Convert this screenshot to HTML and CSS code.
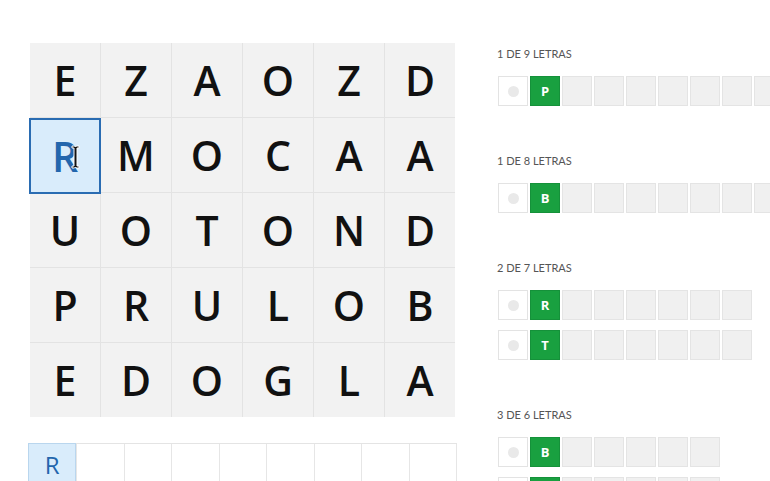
FILE: index.html
```html
<!DOCTYPE html>
<html lang="es">
<head>
<meta charset="utf-8">
<title>Sopa de letras</title>
<link rel="stylesheet" href="styles.css">
</head>
<body>
<div class="app">
  <section class="board">
    <div class="grid">
      <div class="cell">E</div><div class="cell">Z</div><div class="cell">A</div><div class="cell">O</div><div class="cell">Z</div><div class="cell">D</div>
      <div class="cell selected">R<svg class="cursor" width="9" height="24" viewBox="0 0 9 24"><path d="M1 1h2.5l1 1 1-1H8v2H6v18h2v2H5.5l-1-1-1 1H1v-2h2V3H1z" fill="#111" stroke="#fff" stroke-width="1"/></svg></div><div class="cell">M</div><div class="cell">O</div><div class="cell">C</div><div class="cell">A</div><div class="cell">A</div>
      <div class="cell">U</div><div class="cell">O</div><div class="cell">T</div><div class="cell">O</div><div class="cell">N</div><div class="cell">D</div>
      <div class="cell">P</div><div class="cell">R</div><div class="cell">U</div><div class="cell">L</div><div class="cell">O</div><div class="cell">B</div>
      <div class="cell">E</div><div class="cell">D</div><div class="cell">O</div><div class="cell">G</div><div class="cell">L</div><div class="cell">A</div>
    </div>
    <div class="word-input">
      <div class="slot filled">R</div><div class="slot"></div><div class="slot"></div><div class="slot"></div><div class="slot"></div><div class="slot"></div><div class="slot"></div><div class="slot"></div><div class="slot"></div>
    </div>
  </section>
  <aside class="words">
    <div class="group">
      <div class="label">1 DE 9 LETRAS</div>
      <div class="row"><span class="dot-cell"><span class="dot"></span></span><span class="box hint">P</span><span class="box"></span><span class="box"></span><span class="box"></span><span class="box"></span><span class="box"></span><span class="box"></span><span class="box"></span><span class="box"></span></div>
    </div>
    <div class="group">
      <div class="label">1 DE 8 LETRAS</div>
      <div class="row"><span class="dot-cell"><span class="dot"></span></span><span class="box hint">B</span><span class="box"></span><span class="box"></span><span class="box"></span><span class="box"></span><span class="box"></span><span class="box"></span><span class="box"></span></div>
    </div>
    <div class="group">
      <div class="label">2 DE 7 LETRAS</div>
      <div class="row"><span class="dot-cell"><span class="dot"></span></span><span class="box hint">R</span><span class="box"></span><span class="box"></span><span class="box"></span><span class="box"></span><span class="box"></span><span class="box"></span></div>
      <div class="row"><span class="dot-cell"><span class="dot"></span></span><span class="box hint">T</span><span class="box"></span><span class="box"></span><span class="box"></span><span class="box"></span><span class="box"></span><span class="box"></span></div>
    </div>
    <div class="group">
      <div class="label">3 DE 6 LETRAS</div>
      <div class="row"><span class="dot-cell"><span class="dot"></span></span><span class="box hint">B</span><span class="box"></span><span class="box"></span><span class="box"></span><span class="box"></span><span class="box"></span></div>
      <div class="row"><span class="dot-cell"><span class="dot"></span></span><span class="box hint">C</span><span class="box"></span><span class="box"></span><span class="box"></span><span class="box"></span><span class="box"></span></div>
    </div>
  </aside>
</div>
</body>
</html>
```
FILE: styles.css
```css
html, body {
  margin: 0;
  padding: 0;
  background: #ffffff;
  overflow: hidden;
  width: 770px;
  height: 481px;
}
body {
  font-family: "Open Sans", "Noto Sans", sans-serif;
  color: #111;
}
.app {
  display: flex;
  padding: 43px 0 0 30px;
  gap: 41px;
}
.board {
  display: flex;
  flex-direction: column;
  gap: 26px;
  flex: none;
}
.grid {
  display: grid;
  grid-template-columns: repeat(6, 70px);
  grid-template-rows: repeat(5, 74px);
  gap: 1px;
  background: #e3e3e3;
  width: 425px;
}
.cell {
  background: #f2f2f2;
  display: flex;
  align-items: center;
  justify-content: center;
  font-size: 41px;
  font-weight: 600;
  color: #111;
  position: relative;
}
.cell.selected {
  background: #d9ecfb;
  color: #2366ad;
  box-shadow: 0 0 0 1px #2a6cb2, inset 0 0 0 1px #2a6cb2;
  z-index: 1;
  top: 1px;
}
.cursor {
  position: absolute;
  left: 41px;
  top: 26px;
}
.word-input {
  display: flex;
  margin-left: -2px;
  border-top: 1px solid #e4e4e4;
  width: 429px;
}
.slot {
  box-sizing: border-box;
  flex: 1 1 0;
  height: 40px;
  border-left: 1px solid #e6e6e6;
  display: flex;
  justify-content: center;
  padding-top: 9px;
  font-size: 24px;
  font-weight: 500;
  color: #2366ad;
  line-height: 1;
}
.slot:last-child {
  border-right: 1px solid #e6e6e6;
}
.slot.filled {
  background: #d9ecfb;
  border-left-color: #b9d6ee;
  border-right: 1px solid #b9d6ee;
  border-top: 1px solid #b9d6ee;
  margin-top: -1px;
  height: 41px;
}
.words {
  display: flex;
  flex-direction: column;
  gap: 48px;
  padding-top: 4px;
  flex: none;
}
.group {
  display: flex;
  flex-direction: column;
  gap: 10px;
}
.label {
  font-family: "Lato", "Open Sans", sans-serif;
  font-size: 11px;
  line-height: 14px;
  color: #555;
  margin-bottom: 5px;
  margin-left: -1px;
}
.row {
  display: flex;
  gap: 2px;
}
.dot-cell, .box {
  flex: none;
  width: 28px;
  height: 28px;
  border: 1px solid #e3e3e3;
  display: flex;
  align-items: center;
  justify-content: center;
}
.dot-cell {
  background: #fff;
}
.dot {
  width: 11px;
  height: 11px;
  border-radius: 50%;
  background: #e9e9e9;
}
.box {
  background: #f0f0f0;
  border-color: #e4e4e4;
  font-family: "Open Sans", sans-serif;
  font-size: 13px;
  font-weight: 700;
  color: #fff;
}
.box.hint {
  background: #19a040;
  border-color: #15913a;
}
```
